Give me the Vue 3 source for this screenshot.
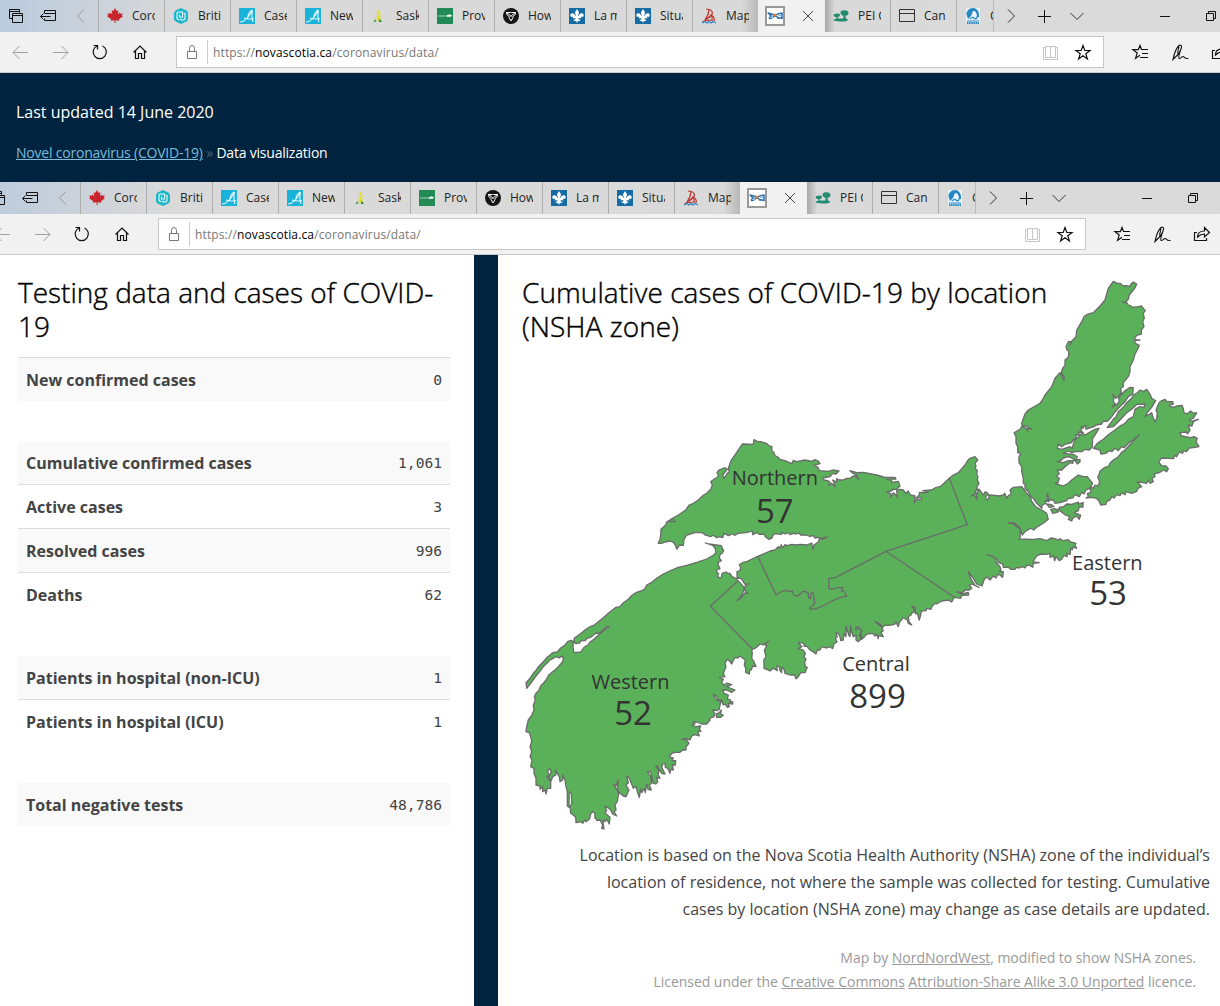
<script setup>
const tabs = [
  { icon: 'maple', label: 'Coro' },
  { icon: 'bc', label: 'Briti' },
  { icon: 'alberta', label: 'Case' },
  { icon: 'alberta', label: 'New' },
  { icon: 'sask', label: 'Sask' },
  { icon: 'manitoba', label: 'Prov' },
  { icon: 'ontario', label: 'How' },
  { icon: 'quebec', label: 'La m' },
  { icon: 'quebec', label: 'Situa' },
  { icon: 'nb', label: 'Map' },
  { icon: 'ns', label: '', active: true },
  { icon: 'pei', label: 'PEI C' },
  { icon: 'page', label: 'Can' },
  { icon: 'yukon', label: 'C', last: true },
]

const groups = [
  [['New confirmed cases', '0']],
  [
    ['Cumulative confirmed cases', '1,061'],
    ['Active cases', '3'],
    ['Resolved cases', '996'],
    ['Deaths', '62'],
  ],
  [
    ['Patients in hospital (non-ICU)', '1'],
    ['Patients in hospital (ICU)', '1'],
  ],
  [['Total negative tests', '48,786']],
]

// Coastline points are kept per survey sheet: origin in map units, points in thirds of a unit.
const west = [510, 530]
const north = [650, 420]
const east = [860, 440]
const breton = [1000, 270]

const sheet = ([ox, oy], pts) =>
  pts.trim().split(/\s+/).map((p) => {
    const [x, y] = p.split(',').map(Number)
    return `${(ox + x / 3).toFixed(1)} ${(oy + y / 3).toFixed(1)}`
  }).join('L')

const land = (...parts) => 'M' + parts.join('L') + 'Z'
const line = (...parts) => 'M' + parts.join('L')

const mainland = land(
  sheet(west, `48,458 58,448 70,430 76,424 84,412 100,395 112,382 128,368 142,366 152,354 165,345 174,334 185,331 190,340 189,352 192,368 212,366 222,352 234,345 240,336 252,328 262,318 280,303 290,296 297,291 290,290 275,304 268,310 258,309 242,322 232,324 226,332 215,331 208,339 198,341 191,335 193,325 215,308 228,298 240,290 252,286 265,275 280,263 295,250 318,232 330,230 338,220 355,208 366,196 380,187 395,182 404,177 410,165 424,158 440,145 460,132 485,120 505,112 530,106 560,97 590,87 610,76 618,68 616,56 608,46 586,39 592,41 618,45 634,47 641,62 636,70 630,74 628,84 634,92 624,98 626,108 630,116 620,120 620,126 626,132 622,138 630,145 634,142 636,130 648,126 654,130 660,130 666,140 678,146 690,158 700,170 702,178 698,190 692,200 681,212 694,203 700,194 706,188 713,190 706,182 703,182 705,168 717,162 706,163 700,156 698,150 690,145 681,144 681,125 690,122 692,113 688,104 700,97 712,94 720,90 743,79`),
  sheet(north, `345,400 360,393 375,390 385,380 388,385 394,374 398,384 405,374 412,377 425,373 440,375 452,373 470,375 485,369 489,388 492,375 505,366 509,354 518,358 532,351 512,355 505,352 495,354 490,347 480,349 468,345 452,345 446,338 440,342 430,340 420,344 415,338 405,342 395,337 395,343 372,341 365,355 356,358 346,350 342,342 328,343 320,338 308,344 306,333 290,338 265,340 255,346 246,342 236,347 222,340 218,353 208,350 200,353 190,346 182,350 165,345 160,340 155,338 135,338 110,345 102,358 100,376 88,375 85,382 80,387 76,375 70,367 60,363 45,366 35,370 25,370 29,360 32,348 33,328 47,315 50,306 68,295 76,305 58,305 62,298 85,285 107,270 118,255 130,250 145,240 160,226 170,220 182,208 187,195 182,185 192,178 202,172 205,165 201,158 207,150 225,143 232,148 218,165 222,175 232,160 238,155 235,145 243,122 258,100 277,72 310,73 312,59 322,64 335,66 350,70 356,77 366,80 365,92 371,97 376,108 382,110 390,118 405,122 425,131 430,121 440,125 465,120 485,124 495,119 505,123 510,131 492,136 504,142 508,152 535,154 548,150 567,153 558,162 548,160 540,170 518,174 522,180 535,183 540,186 536,196 545,190 555,200 553,190 548,180 560,186 560,176 568,180 580,180 590,175 600,175 610,168 618,168 627,180 620,165 609,160 600,152 620,158 640,157 680,165 705,172 735,172 738,177 710,178 725,180 724,187 745,184 750,198 740,208 725,208`),
  sheet(east, `98,151 80,157 92,160 92,172 100,158 108,165 112,173 110,152 120,148 130,150 137,160 145,153 150,164 165,168 163,188 168,180 185,178 184,172 168,175 178,165 178,157 190,158 205,157 188,152 215,150 226,143 240,140 252,130 268,115 280,105 295,98 302,90 315,75 322,63 330,55 345,50 353,60 345,70 348,78 346,85 352,92 350,103 354,110 352,119 357,130 350,143 354,149 346,153 348,161 334,168 344,165 350,178 350,160 358,148 370,165 376,155 384,160 376,175 382,180 388,170 384,164 405,166 418,168 430,165 434,160 440,174 446,166 454,162 450,150 460,142 485,140 493,150 500,160 512,172 514,182 520,190 526,199 535,205 545,210 560,220 565,238 550,250 540,256 530,262 521,270 512,265 495,275 487,285 482,272 479,262 470,255 462,248 445,249 460,251 470,260 480,265 481,290 478,297 520,298 540,296 560,302 572,294 585,296 595,300 600,296 610,302 625,299 632,306 648,310 645,316 650,325 640,321 637,329 632,325 630,343 620,340 622,350 612,346 605,358 598,362 588,350 584,362 580,348 570,352 570,340 560,343 545,342 534,345 527,352 519,366 538,368 520,370 518,382 508,376 500,376 495,384 488,380 478,384 470,382 465,388 452,388 445,382 430,382 428,372 415,368 412,358 400,350 382,344 404,352 410,370 420,380 423,390 418,395 430,395 428,412 415,402 408,414 400,408 390,420 380,410 372,420 366,438 350,432 340,415 325,395 332,415 345,436 357,442 335,432 328,435 336,445 328,450 318,450 305,458 290,455 305,462 325,457 326,465 305,466 302,475 283,472 275,486 265,480 245,483 230,492 225,490 215,500 213,508 200,505 198,512 184,513 182,525 178,540 172,520 167,522 162,508 155,498 166,502 165,515 157,518 152,526 145,530 147,545 155,555 145,550 142,540 130,533 118,548 115,560 108,546 105,552 90,556 75,556 68,562 60,552 45,544 55,553 65,562 70,572 63,577 70,590 55,587 55,596 50,582 45,588 38,580 20,582 12,592 5,598 4,585 0,590 5,572 0,565`),
  sheet(north, `618,620 617,630 626,622 636,634 628,645 634,656 625,665 618,660 618,645 610,650 606,640 602,618 600,650 596,645 588,618 588,650 582,640 580,660 572,662 570,650 565,640 558,638 562,650 556,654 561,665 552,672 548,686 540,680 530,684 515,680 510,690 502,690 498,702 490,696 480,690 472,680 462,678 462,670 445,668 456,680 445,685 460,690 466,700 462,712 468,718 464,726 466,740 472,742 465,758 452,758 445,770 438,776 434,765 420,765 405,760 402,748 395,740 395,758 390,752 388,740 380,738 382,752 370,745 360,753 350,748 342,745 342,730 341,720 348,710 343,690 350,678 342,672 357,664 340,675 330,672 318,683 305,690 307,700 305,715 312,725 318,740 308,738 304,750 300,748 298,762 287,757 287,745 283,735 286,720 270,708 263,714 255,712 248,725 245,732 238,722 230,718`),
  sheet(west, `650,390 645,400 648,410 642,425 640,432 645,440 628,442 640,448 635,456 642,466 651,459 665,464 650,470 660,474 675,480 665,487 650,480 638,480 642,490 655,495 652,507 662,510 660,518 668,515 668,522 655,520 658,530 652,532 646,522 640,525 635,510 625,512 622,500 610,494 622,512 634,514 630,525 628,538 622,542 608,540 614,550 612,560 598,565 600,570 590,582 575,582 560,576 550,576 555,582 545,586 558,590 572,588 568,598 573,603 564,605 568,618 555,614 545,618 540,630 528,625 515,628 530,630 537,640 528,650 528,660 518,660 510,667 495,667 485,670 478,682 490,684 486,692 497,692 496,705 487,705 490,720 482,718 480,730 473,715 466,712 465,700 458,702 455,712 465,732 455,730 448,720 442,708 437,708 446,720 445,735 450,745 440,742 443,755 437,762 430,760 425,740 422,726 412,725 422,740 425,760 418,765 424,780 414,778 410,762 406,788 403,775 395,788 392,776 388,802 382,785 378,770 370,775 362,755 358,745 350,738 355,758 348,765 357,780 348,800 340,798 330,790 322,778 325,750 318,768 310,762 318,775 326,790 322,815 315,825 318,840 312,845 320,858 308,852 300,838 285,828 290,842 285,848 292,855 300,862 298,882 290,868 285,875 278,870 282,897 275,895 278,885 270,870 262,872 255,864 254,850 248,845 243,850 238,868 228,875 224,870 218,880 213,875 198,878 197,862 190,855 182,850 180,830 185,820 184,790 178,785 177,832 172,828 172,785 168,770 165,750 158,735 158,750 150,755 148,740 136,720 138,735 128,740 122,755 116,740 124,728 120,716 112,722 118,735 110,740 122,755 122,775 112,775 108,792 105,780 98,785 98,770 90,778 90,768 78,765 78,745 72,730 72,715 62,710 66,690 60,680 65,665 60,650 65,635 62,620 58,608 48,605 50,590 55,570 64,558 72,540 70,525 76,510 73,500 78,490 86,482 92,468 100,460 108,450 116,435 128,425 135,420 145,410 158,395 160,384 155,378 148,384 138,380 128,386 120,390 100,410 90,424 80,435 62,460 50,475`),
)

const capeBretonWest = land(
  sheet(breton, `340,34 352,40 360,40 370,48 378,47 390,49 393,42 400,36 410,42 406,52 400,60 388,75 385,88 378,95 368,97 380,98 385,105 392,107 397,112 415,110 425,108 430,115 436,122 430,130 433,145 428,155 432,170 424,180 424,192 410,196 404,205 405,210 420,210 404,212 406,220 418,226 412,240 405,252 400,270 390,290 390,305 385,320 370,338 370,350 362,355 364,368 356,378 348,385 338,372 342,385 340,395 346,402 336,412 352,402 358,394 356,384 362,376 375,362 390,352 400,353 398,372 385,380 375,395 355,415 342,430 335,440 322,454 310,453 305,462 288,465 282,470 265,475 258,478 257,465 248,475 245,468 243,482 250,488 235,486 238,495 228,495 228,508 218,510 215,518 195,523 185,530 175,522 172,535 185,538 210,530 216,535 222,518 222,508 235,502 245,490 255,495 275,483 285,478 297,475 288,490 278,505 277,530 268,540 255,538 245,545 225,545 215,548 205,543 190,550 220,553 232,560 228,570 240,568 240,576 232,582 225,572 218,565 205,560 190,564 182,572 172,575 190,578 205,572 220,572 218,580 210,578 195,590 185,600 172,600 178,612 168,618 178,625 174,638 165,640 190,648 205,640 215,630 235,615 250,620 262,620 278,640 270,655 258,660 252,672 245,667 238,680 225,674 218,684 205,685 200,692 180,698 165,700 160,690 148,690 142,670 141,685 147,695 135,692 138,700 127,705 125,715 110,700 100,685 92,680 85,665 75,655 75,642 70,640 70,625 65,605 65,590 57,578 57,560 63,550 53,548 53,530 48,520 48,500 42,488 60,478 66,468 72,472 80,476 82,483 84,474 95,478 78,468 66,468 65,460 75,432 85,420 120,400 128,388 135,375 155,350 165,325 180,308 186,318 192,332 192,320 184,308 188,295 195,285 195,270 205,262 207,245 200,238 198,230 205,215 215,215 210,225 216,212 228,200 230,180 245,155 252,140 262,133 280,128 300,108 315,90 320,72 325,55`),
)

const capeBretonEast = land(
  sheet(breton, `322,473 340,470 352,458 380,428 395,418 412,402 420,403 436,402 432,412 418,410 405,418 400,440 385,448 375,460 360,468 345,480 325,494 310,508 292,520 280,535 300,540 302,552 318,550 328,542 335,545 345,535 355,542 365,530 372,533 390,515 400,512 418,494 400,510 395,518 375,540 365,547 355,560 340,570 330,580 326,588 315,592 300,603 298,612 293,622 299,635 294,648 285,645 280,655 270,650 272,668 262,670 265,680 258,684 275,682 290,685 298,695 302,705 318,703 320,695 330,690 335,680 342,684 350,674 360,677 365,668 375,674 378,665 395,670 410,664 414,655 425,650 412,635 440,640 445,630 450,640 460,635 456,625 465,620 462,612 478,608 490,600 500,605 505,596 498,588 485,587 476,577 484,564 500,565 520,566 525,556 530,560 538,545 548,550 550,542 560,545 568,534 585,532 597,530 588,515 592,505 582,500 572,503 545,498 540,488 560,486 562,492 570,482 565,465 576,468 580,455 595,448 575,454 568,448 580,445 590,428 580,430 572,423 560,432 552,428 550,416 546,406 530,408 520,412 506,406 520,402 518,395 500,394 495,388 480,395 474,405 468,420 472,430 470,445 466,455 460,445 455,428 450,432 440,436 435,440 440,430 455,412 467,392 455,385 450,372 440,358 432,364 420,360 412,368 400,375 395,385 380,398 370,412 355,425 348,440 338,450`),
)

const isles = [
  land(sheet(breton, '178,712 190,710 200,702 215,703 235,696 235,702 250,698 248,712 238,710 235,722 222,728 242,735 238,748 230,738 218,745 215,753 205,748 210,740 196,735 180,722 170,718 180,716')),
  land(sheet(breton, '152,718 165,716 176,725 168,728 158,730')),
  land(sheet(breton, '140,702 155,704 162,710 148,712')),
  land(sheet(west, '618,552 628,548 634,540 632,552 640,556 632,562 620,562')),
]

const borders = [
  line(sheet(west, '681,155 601,229 728,358')),
  line(sheet(north, '323,409 378,525 392,516 405,511 415,514 427,513 432,526 440,529 450,524 455,516 465,514 474,518 476,533 481,536 483,520 488,516 493,535 494,548 488,557 480,562 480,568 500,566 525,555 550,541 570,533 590,528 582,514 574,512 578,503 560,503 548,508 536,505 537,475 556,473 708,394'), sheet(east, '78,334 322,254 268,115')),
  line(sheet(east, '78,334 283,472')),
]

const labels = [
  { name: 'Northern', count: '57', x: 774.8, y: 485, cy: 522.7 },
  { name: 'Western', count: '52', x: 630.5, y: 688.6, cy: 724.5, cx: 633 },
  { name: 'Eastern', count: '53', x: 1107.3, y: 569.6, cy: 604.7, cx: 1108 },
  { name: 'Central', count: '899', x: 876, y: 670.7, cy: 707.5, cx: 877.5 },
]
</script>

<template>
  <div class="screen">
    <template v-for="n in 2" :key="n">
      <div class="browser" :class="{ shifted: n === 2 }">
        <div class="tabbar">
          <div class="lead">
            <svg width="32" height="32" fill="none" stroke="#111"><path d="M12.500 18.500h-3v-9h10v3M9.500 11.500h10M12.500 13.500h10v9h-10zM12.500 15.500h10" /></svg>
            <svg width="32" height="32" fill="none" stroke="#111"><path d="M12.500 13v-2.500h11v10h-11v-2M12.500 13.500h11M8.500 16.500h10M11.500 13.500l-3 3 3 3" /></svg>
            <svg width="34" height="32" fill="none" stroke="#999"><path d="M20 9.500l-6.500 6.500 6.500 6.500" /></svg>
          </div>
          <div v-for="(t, i) in tabs" :key="i" class="tab" :class="{ active: t.active, last: t.last, after: t.icon === 'pei', before: t.icon === 'nb' }">
            <svg v-if="t.icon === 'maple'" class="fav" viewBox="0 0 16 16"><path fill="#c8242b" d="M8 0l1.700 3 1.800-.8-.6 4 2-1.700.5 1.300 2.400-.3-.9 2 1.100.8-4 3 .3 1.500-3.700-.6V15h-1v-2.800l-3.800.6.4-1.500-4.200-3 1.100-.8-.8-2 2.300.3.500-1.300 2.200 1.700-.7-4 1.700.8z" /></svg>
            <svg v-else-if="t.icon === 'bc'" class="fav" viewBox="0 0 16 16"><path fill="#1fb5c9" d="M8 0l5.500 2.500 1.500 2v7l-1.500 2L8 16l-5.500-2.500-1.500-2v-7l1.500-2z" /><path fill="none" stroke="#e6fbff" stroke-width="1.100" d="M6.500 11.500H5L4 10.500V5l1-1h4.500v5H6.500V6.500M10.500 5.500H12v5l-1 1.500H8v-1.500" /></svg>
            <svg v-else-if="t.icon === 'alberta'" class="fav" viewBox="0 0 16 16"><path fill="#19b2d8" d="M0 0h16v16H0z" /><path fill="none" stroke="#dff6fb" stroke-width="1.100" d="M1 14C6 14 11 7 13.500 2c-.8 4-.7 9 .5 12M5 10c3 1 6 1.500 10 .5M13 2c-3 2-5 6-4 9" /></svg>
            <svg v-else-if="t.icon === 'sask'" class="fav" viewBox="0 0 16 16"><path fill="#e9dd22" d="M8.500 1.500C6 3 5.500 5 6 7l2.500-2zM10 5C7 7 5.500 9 6 11l3-2.500zM5 7.500L3 13l2.500-3zM9.500 8.500c-2 1-4 3-4 5l4-1z" /><path fill="#168852" d="M4 11.500L2.500 14.500 5.500 13zM8.500 10.500l2.500 3.500H8z" /></svg>
            <svg v-else-if="t.icon === 'manitoba'" class="fav" viewBox="0 0 16 16"><path fill="#218a55" d="M0 0h16v16H0z" /><path stroke="#cbe8d8" stroke-width="1.200" stroke-dasharray="1.400 .5" d="M1 8h9" /><path fill="#fff" d="M10 7.200l2.500-1L15 7.500l-1.200 1.200H10z" /></svg>
            <svg v-else-if="t.icon === 'ontario'" class="fav" viewBox="0 0 16 16"><circle cx="8" cy="8" r="8" fill="#151515" /><path fill="none" stroke="#fff" stroke-width="1" d="M7.500 7.500L3.500 4.500h4L8 5l.5-.5h4l-4 3M3.500 4.500c0 2 .8 3.200 2.500 3.800M12.500 4.500c0 2-.8 3.200-2.500 3.800M8 7.500L6 9.500 8 13l2-3.500z" /></svg>
            <svg v-else-if="t.icon === 'quebec'" class="fav" viewBox="0 0 16 16"><path fill="#176ba5" d="M0 0h16v16H0z" /><path fill="#fff" d="M8 1l2 3.200L9.200 8h.5c.3-3 4.500-4 5-1 .2 1.800-1.500 2.500-2.500 1.500-.5.5-.2 1 .3 1.700H9.500c0 1.500.8 1.800 2 1.600-.5 1.500-2 1.800-2.500 1L8 15l-1-2.200c-.5.8-2 .5-2.500-1 1.200.2 2-.1 2-1.600h-3c.5-.7.800-1.200.3-1.700C2.800 9.500 1.100 8.800 1.300 7c.5-3 4.700-2 5 1h.5L6 4.200z" /></svg>
            <svg v-else-if="t.icon === 'nb'" class="fav" viewBox="0 0 16 16"><path fill="none" stroke="#b9332f" stroke-width="1.200" d="M5 1l3 .5c3 .5 4 3 3 5L4 12l4-7.500M8 2l-1 4M9 7c3 0 4 2 4.500 5L4 12.500 1.500 14M10 8l-4 3M11 8v4" /><path fill="none" stroke="#2f83c8" stroke-width="1.300" d="M1 15l3-1.500 2 1.500 2-1.500L10 15l2-1.500 3 1.500" /></svg>
            <svg v-else-if="t.icon === 'pei'" class="fav" viewBox="0 0 16 16"><path fill="#218c70" d="M7.500 5c0-2 2-3 3.500-2.500 2-.5 4.500.5 4.500 2.500 0 1.500-1 2.800-3 2.800l.4 2.700c1 .3 2.100.8 2.100 1.500-1 1.500-3 1.500-6 1.500S.5 13.300.500 12c.5-.7 2-1.300 3-1.300L3.300 9C1 9 .5 8 .7 7c.3-1.200 2-1.500 3-1.200C5 5 7 5.500 7 7.200c0 1-1 1.700-2.200 1.700v1.700h5.500l.2-2.800C9 7.500 7.500 6.500 7.500 5z" /></svg>
            <svg v-else-if="t.icon === 'page'" class="fav" viewBox="0 0 16 16" fill="none" stroke="#333"><path d="M.5 1.500h15v12H.5zM.5 5.500h15" /></svg>
            <svg v-else-if="t.icon === 'yukon'" class="fav" viewBox="0 0 16 16"><path fill="#e8f2f8" d="M1 0h14v16H1z" /><path fill="#2687c2" d="M8 0C4 0 1.500 3 1.500 6.500L3 11l3-3 2-5 2.500.5L12 7l-1 3 3-1c.6-5-2-9-6-9z" /><path fill="none" stroke="#2687c2" stroke-width="1.200" d="M5 11c2-2 3-2 4-1s2 1 3 0M2 13h12" /><path stroke="#2687c2" stroke-width="2" stroke-dasharray="1.500 .6" d="M2 15h12" /></svg>
            <template v-else>
              <svg class="nsicon" viewBox="0 0 20 20"><path fill="#fff" stroke="#999" stroke-width="2" d="M1 1h18v18H1z" /><path fill="none" stroke="#2b6ba6" stroke-width="1.500" d="M2.500 7c3 0 5 1 7 2.500s4.500 3 8 3M4 12.500c2.500 0 4-1 5.500-2.500S13 7.500 17.500 7M3 7l3 3-2 2.500M17 7v6M6 8.500h3M12 12h4" /><path fill="none" stroke="#8fbfe0" d="M5 11.500h3M13 9.500h3" /><circle cx="10" cy="9" r="1.500" fill="#ef7f35" /></svg>
              <svg class="close" width="12" height="12" stroke="#444"><path d="M1 1l10 10M11 1L1 11" /></svg>
            </template>
            <span v-if="!t.active" class="label">{{ t.label }}</span>
          </div>
          <svg class="tail" width="230" height="32" fill="none" stroke="#111"><path stroke="#333" d="M14 9.500l6.500 6.500-6.500 6.500" /><path d="M44 16.500h13M50.500 10v13M166 16.500h10M212.500 13.500h7v7h-7zM214.500 13.500v-2h7v7h-2" /><path stroke="#333" d="M76.500 13l6.500 6.500 6.500-6.500" /></svg>
        </div>
        <div class="toolbar">
          <svg class="cell" fill="none" stroke="#a0a0a0"><path d="M13 20.500h15M19.500 14l-6.500 6.500 6.500 6.500" /></svg>
          <svg class="cell" fill="none" stroke="#a0a0a0"><path d="M13 20.500h15M21.500 14l6.500 6.500-6.500 6.500" /></svg>
          <svg class="cell" fill="none" stroke="#111" stroke-width="1.200"><path d="M22.500 14a6.600 6.600 0 1 1-5.500 0M13.500 13.500h4v4" /></svg>
          <svg class="cell" fill="none" stroke="#111" stroke-width="1.200"><path d="M13.500 20.500l6.500-6.500 6.500 6.500M15.500 19v7.500h3v-5h3v5h3V19" /></svg>
          <div class="address">
            <svg class="lock" width="30" height="30" fill="none" stroke="#777"><path d="M10.500 14.500h9v7h-9zM12.500 14.500v-3a2.500 3 0 0 1 5 0v3" /></svg>
            <span class="url">https://<b>novascotia.ca</b>/coronavirus/data/</span>
            <svg class="read" width="32" height="30" fill="none" stroke="#c6c6c6"><path d="M10.500 10.500h-2v12h14v-12h-2M10.500 9.500h5v11h-5zM15.500 9.500h5v11h-5z" /></svg>
            <svg class="fave" width="32" height="30" fill="none" stroke="#111" stroke-width="1.200"><path d="M16 8.500l1.800 5h5.200l-4.200 3.200 1.600 5.300-4.400-3.200-4.400 3.200 1.600-5.300L9 13.500h5.200z" /></svg>
          </div>
          <svg class="cell" fill="none" stroke="#111" stroke-width="1.200"><path d="M21.500 17.500l-1.500-4-1.700 4.200H13l4.200 3.200-1.600 5.300 4.400-3M21 17.500h7M22 21.500h6M20 25.500h8" /></svg>
          <svg class="cell" fill="none" stroke="#111" stroke-width="1.100"><path d="M13 27.500l1-4c1-4 3-8 5-10 1.500-1 3 0 2.500 2-1 4-3.500 7.500-7 10.500zM19 14.500l-1.500 7M21 17c-1.500 4-3 8-2 9.500 1.500.5 2.500-2 4-2s1 2.500 5.500 2" /></svg>
          <svg class="cell" fill="none" stroke="#111" stroke-width="1.200"><path d="M15 18.500h-2.500v8h12V24M15.500 23c0-4 3-6 7-6v-3.500l5 5-5 4.500v-3c-3 0-5 1-7 3z" /></svg>
        </div>
      </div>
      <header v-if="n === 1" class="banner">
        <p class="updated">Last updated 14 June 2020</p>
        <p class="crumbs"><a>Novel coronavirus (COVID-19)</a> <i>»</i> Data visualization</p>
      </header>
    </template>

    <main class="content">
      <section class="stats">
        <h2>Testing data and cases of COVID-<br>19</h2>
        <div v-for="(g, gi) in groups" :key="gi" class="group" :class="{ first: gi === 0 }">
          <div v-for="row in g" :key="row[0]" class="row">
            <strong>{{ row[0] }}</strong><span>{{ row[1] }}</span>
          </div>
        </div>
      </section>
      <section class="zones">
        <div class="stage">
          <svg class="map" viewBox="498 255 722 586">
            <g fill="#5ab15a" stroke="#6b6b6b" stroke-width="1.300" stroke-linejoin="round">
              <path :d="mainland" />
              <path :d="capeBretonWest" />
              <path :d="capeBretonEast" />
              <path v-for="(d, i) in isles" :key="i" :d="d" />
            </g>
            <path v-for="(d, i) in borders" :key="i" :d="d" fill="none" stroke="#6b6b6b" stroke-width="1.300" />
            <g v-for="l in labels" :key="l.name" class="zone-label">
              <text :x="l.x" :y="l.y" font-size="20">{{ l.name }}</text>
              <text :x="l.cx || l.x" :y="l.cy" font-size="33">{{ l.count }}</text>
            </g>
          </svg>
          <h2>Cumulative cases of COVID-19 by location<br>(NSHA zone)</h2>
        </div>
        <p class="note">Location is based on the Nova Scotia Health Authority (NSHA) zone of the individual’s<br>location of residence, not where the sample was collected for testing. Cumulative<br>cases by location (NSHA zone) may change as case details are updated.</p>
        <p class="credit">Map by <a>NordNordWest</a>, modified to show NSHA zones.<br>Licensed under the <a>Creative Commons</a> <a>Attribution-Share Alike 3.0 Unported</a> licence.</p>
      </section>
    </main>
  </div>
</template>

<style>
body { margin: 0; }
</style>

<style scoped>
.screen {
  width: 1220px;
  height: 1006px;
  overflow: hidden;
  display: flex;
  flex-direction: column;
  background: #00233f;
  font-family: "Open Sans", sans-serif;
}
p, h2 { margin: 0; }
svg { flex: none; display: block; }

.browser { width: 1260px; height: 73px; flex: none; background: #f1f1f1; }
.shifted { margin-left: -18px; }
.tabbar {
  display: flex;
  height: 32px;
  background: linear-gradient(90deg, #bacbdd 0, #cad1da 90px, #d9d9d9 180px, #dadada 100%);
}
.lead { display: flex; width: 98px; flex: none; }
.tab {
  box-sizing: border-box;
  width: 66px;
  flex: none;
  display: flex;
  align-items: center;
  border-left: 1px solid #adadad;
  overflow: hidden;
}
.tab.before { background: linear-gradient(90deg, transparent 75%, #b8b8b8); }
.tab.active { width: 67px; background: #f1f1f1; border: 0; }
.tab.after { width: 65px; border: 0; background: linear-gradient(90deg, #a8a8a8, transparent 10px); }
.tab.last { width: 38px; border-right: 1px solid #bbb; }
.fav { width: 16px; height: 16px; margin-left: 8px; }
.nsicon { width: 20px; height: 20px; margin-left: 7px; }
.close { margin-left: 17px; }
.label {
  width: 23px;
  margin-left: 9px;
  overflow: hidden;
  white-space: nowrap;
  font-size: 12px;
  line-height: 20px;
  color: #222;
}
.last .label { width: 4px; }
.toolbar {
  box-sizing: border-box;
  height: 41px;
  display: flex;
  border-bottom: 1px solid #c9c9c9;
}
.cell { width: 40px; height: 40px; }
.address {
  box-sizing: border-box;
  display: flex;
  align-items: center;
  width: 928px;
  height: 32px;
  margin: 4px 16px 0;
  flex: none;
  background: #fff;
  border: 1px solid #c6c6c6;
}
.lock { border-right: 1px solid #ccc; height: 24px; margin-top: -1px; }
.lock path { transform: translateY(-3px); }
.url { flex: 1; margin-left: 5px; font-size: 12px; letter-spacing: 0.13px; color: #777; white-space: nowrap; }
.url b { font-weight: 400; color: #000; }
.fave { margin-right: 4px; }

.banner { height: 109px; flex: none; color: #fff; padding-left: 16px; }
.updated { padding-top: 27px; font-size: 16px; line-height: 24px; }
.crumbs { margin-top: 18px; font-size: 14px; line-height: 22px; letter-spacing: -0.21px; }
.crumbs a { color: #7dbcd8; text-decoration: underline; }
.crumbs i { font-style: normal; color: #55606a; }

.content { flex: 1; display: flex; gap: 24px; }
.stats { box-sizing: border-box; width: 474px; background: #fff; padding: 20px 24px 0 18px; }
h2 {
  font-size: 28px;
  line-height: 34px;
  font-weight: 300;
  -webkit-text-stroke: 0.4px #000;
  color: #000;
  white-space: nowrap;
}
.group { margin-top: 40px; }
.group.first { margin-top: 14px; border-top: 1px solid #ddd; }
.row {
  display: flex;
  justify-content: space-between;
  align-items: center;
  height: 43px;
  padding: 0 8px;
  font-size: 16px;
  color: #444;
}
.row + .row { border-top: 1px solid #ddd; }
.row:nth-child(odd) { background: #f9f9f9; }
.row span { font-family: "DejaVu Sans Mono", monospace; font-size: 14.6px; }

.zones { width: 722px; background: #fff; color: #444; text-align: right; }
.stage { position: relative; height: 587px; text-align: left; }
.stage h2 { position: relative; padding: 20px 0 0 24px; letter-spacing: 0.06px; }
.map { position: absolute; left: 0; top: 0; width: 722px; height: 586px; }
.zone-label { fill: #333; text-anchor: middle; }
.note { font-size: 16px; line-height: 27px; margin-right: 10px; white-space: nowrap; }
.credit { margin: 23px 24px 0 0; font-size: 14px; line-height: 24px; letter-spacing: -0.045px; color: #999; white-space: nowrap; }
.credit a { text-decoration: underline; }
</style>
